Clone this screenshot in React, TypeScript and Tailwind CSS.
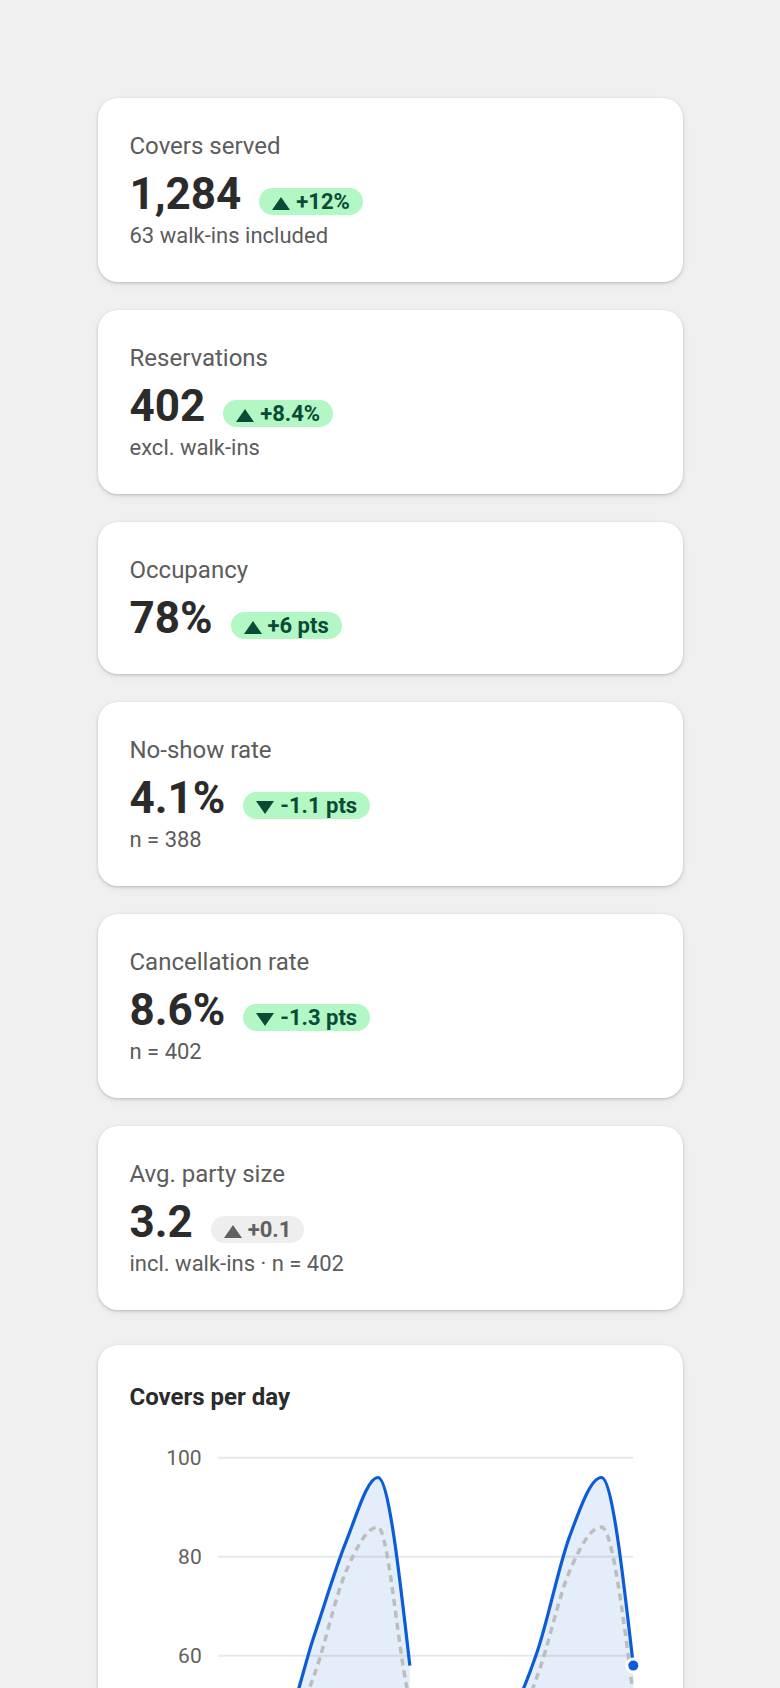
import React from "react";

type Tone = "good" | "neutral";

interface Kpi {
  label: string;
  value: string;
  delta: string;
  dir: "up" | "down";
  tone: Tone;
  note?: string;
}

const kpis: Kpi[] = [
  { label: "Covers served", value: "1,284", delta: "+12%", dir: "up", tone: "good", note: "63 walk-ins included" },
  { label: "Reservations", value: "402", delta: "+8.4%", dir: "up", tone: "good", note: "excl. walk-ins" },
  { label: "Occupancy", value: "78%", delta: "+6 pts", dir: "up", tone: "good" },
  { label: "No-show rate", value: "4.1%", delta: "-1.1 pts", dir: "down", tone: "good", note: "n = 388" },
  { label: "Cancellation rate", value: "8.6%", delta: "-1.3 pts", dir: "down", tone: "good", note: "n = 402" },
  { label: "Avg. party size", value: "3.2", delta: "+0.1", dir: "up", tone: "neutral", note: "incl. walk-ins · n = 402" },
];

// two weeks of daily covers, day 7 missing
const current: (number | null)[] = [40, 42, 45, 64, 83, 96, 58, null, 40, 46, 61, 84, 96, 58];
const previous: number[] = [38, 40, 42, 56, 77, 86, 51, 40, 38, 42, 56, 77, 86, 52];

function Triangle({ dir }: { dir: "up" | "down" }) {
  return (
    <svg width="18" height="13" viewBox="0 0 18 13" className="mr-1.5 inline-block">
      {dir === "up" ? <path d="M9 0L18 13H0Z" fill="currentColor" /> : <path d="M0 0H18L9 13Z" fill="currentColor" />}
    </svg>
  );
}

function Badge({ delta, dir, tone }: { delta: string; dir: "up" | "down"; tone: Tone }) {
  const cls =
    tone === "good"
      ? "bg-[#b3f7c4] text-[#0a4b35]"
      : "bg-[#eeeeee] text-[#606060]";
  return (
    <span className={`inline-block h-[27px] rounded-full px-[13px] text-[22px] font-bold leading-[27px] whitespace-nowrap ${cls}`}>
      <Triangle dir={dir} />
      {delta}
    </span>
  );
}

function KpiCard({ kpi }: { kpi: Kpi }) {
  return (
    <div className="rounded-[20px] bg-white px-8 py-8 shadow-[0_1px_3px_rgba(0,0,0,0.2),0_3px_10px_rgba(0,0,0,0.05)]">
      <div className="text-[24px] leading-8 text-[#5c5c5c]">{kpi.label}</div>
      <div className="mt-2 flex items-baseline gap-[18px]">
        <span className="text-[44px] font-bold leading-[48px] text-[#2b2b2b]">{kpi.value}</span>
        <Badge delta={kpi.delta} dir={kpi.dir} tone={kpi.tone} />
      </div>
      {kpi.note && <div className="mt-1 text-[22px] leading-7 text-[#5c5c5c]">{kpi.note}</div>}
    </div>
  );
}

type Pt = [number, number];

// monotone-x cubic, same as d3's curveMonotoneX
function monotonePath(pts: Pt[]): string {
  const n = pts.length;
  if (n === 0) return "";
  if (n === 1) return `M${pts[0][0]},${pts[0][1]}`;
  const sign = (v: number) => (v < 0 ? -1 : 1);
  const t: number[] = new Array(n).fill(0);
  for (let i = 1; i < n - 1; i++) {
    const [x0, y0] = pts[i - 1];
    const [x1, y1] = pts[i];
    const [x2, y2] = pts[i + 1];
    const h0 = x1 - x0;
    const h1 = x2 - x1;
    const s0 = (y1 - y0) / h0;
    const s1 = (y2 - y1) / h1;
    const p = (s0 * h1 + s1 * h0) / (h0 + h1);
    t[i] = (sign(s0) + sign(s1)) * Math.min(Math.abs(s0), Math.abs(s1), 0.5 * Math.abs(p)) || 0;
  }
  if (n === 2) {
    const s = (pts[1][1] - pts[0][1]) / (pts[1][0] - pts[0][0]);
    t[0] = s;
    t[1] = s;
  } else {
    const h0 = pts[1][0] - pts[0][0];
    t[0] = (3 * (pts[1][1] - pts[0][1]) / h0 - t[1]) / 2;
    const hn = pts[n - 1][0] - pts[n - 2][0];
    t[n - 1] = (3 * (pts[n - 1][1] - pts[n - 2][1]) / hn - t[n - 2]) / 2;
  }
  let d = `M${pts[0][0]},${pts[0][1]}`;
  for (let i = 0; i < n - 1; i++) {
    const [x0, y0] = pts[i];
    const [x1, y1] = pts[i + 1];
    const dx = (x1 - x0) / 3;
    d += `C${x0 + dx},${y0 + dx * t[i]},${x1 - dx},${y1 - dx * t[i + 1]},${x1},${y1}`;
  }
  return d;
}

function CoversChart() {
  const W = 521;
  const H = 600;
  const left = 88.3;
  const right = 503.3;
  const top = 40.7;
  const unit = 4.95;
  const step = (right - left) / (current.length - 1);
  const x = (i: number) => left + i * step;
  const y = (v: number) => top + (100 - v) * unit;
  const base = y(0);

  // split current series at nulls
  const segments: Pt[][] = [];
  let seg: Pt[] = [];
  current.forEach((v, i) => {
    if (v === null) {
      if (seg.length) segments.push(seg);
      seg = [];
    } else {
      seg.push([x(i), y(v)]);
    }
  });
  if (seg.length) segments.push(seg);

  const prevPts: Pt[] = previous.map((v, i) => [x(i), y(v)]);
  const last = segments[segments.length - 1][segments[segments.length - 1].length - 1];

  return (
    <svg width={W} height={H} viewBox={`0 0 ${W} ${H}`} className="block">
      {[100, 80, 60, 40, 20, 0].map((v) => (
        <g key={v}>
          <line x1={left} x2={right} y1={y(v)} y2={y(v)} stroke="#e8e8e8" strokeWidth="2" />
          <text x={71.7} y={y(v) + 7.6} textAnchor="end" fontSize="21" fill="#616161" fontFamily="Roboto, sans-serif">
            {v}
          </text>
        </g>
      ))}
      {segments.map((s, i) => (
        <path
          key={`a${i}`}
          d={`${monotonePath(s)}L${s[s.length - 1][0]},${base}L${s[0][0]},${base}Z`}
          fill="rgba(11,92,214,0.11)"
        />
      ))}
      <path d={monotonePath(prevPts)} fill="none" stroke="#bdbdbd" strokeWidth="3.5" strokeDasharray="7 5" />
      {segments.map((s, i) => (
        <path key={`l${i}`} d={monotonePath(s)} fill="none" stroke="#0b5cd6" strokeWidth="3.2" strokeLinejoin="round" />
      ))}
      <circle cx={last[0]} cy={last[1]} r="6.5" fill="#0b5cd6" stroke="#ffffff" strokeWidth="3" />
    </svg>
  );
}

export default function App() {
  return (
    <div className="min-h-screen bg-[#f0f0f0] font-['Roboto',sans-serif]">
      <div className="mx-auto w-[585px] pt-[98px] pb-10">
        <div className="flex flex-col gap-7">
          {kpis.map((k) => (
            <KpiCard key={k.label} kpi={k} />
          ))}
        </div>
        <div className="mt-[35px] rounded-[20px] bg-white px-8 pt-8 pb-6 shadow-[0_1px_3px_rgba(0,0,0,0.2),0_3px_10px_rgba(0,0,0,0.05)]">
          <h3 className="text-[24px] font-bold leading-10 text-[#2b2b2b]">Covers per day</h3>
          <CoversChart />
        </div>
      </div>
    </div>
  );
}
